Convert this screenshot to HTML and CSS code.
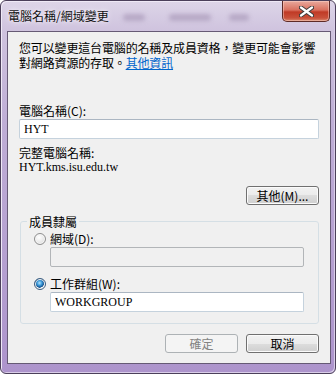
FILE: index.html
```html
<!DOCTYPE html>
<html lang="zh-Hant">
<head>
<meta charset="UTF-8">
<title>電腦名稱/網域變更</title>
<link rel="stylesheet" href="styles.css">
</head>
<body>

<div class="window">
  <div class="titlebar">
    <span class="title">電腦名稱/網域變更</span>
    <div class="glass">
      <span class="smudge s1"></span>
      <span class="smudge s2"></span>
      <span class="smudge s3"></span>
    </div>
    <button class="close">
      <svg width="15" height="11" viewBox="0 0 15 11">
        <path d="M2 1.5 L13 9.5 M13 1.5 L2 9.5" stroke="#3b3b3b" stroke-width="4.2" stroke-linecap="round"/>
        <path d="M2 1.5 L13 9.5 M13 1.5 L2 9.5" stroke="#ffffff" stroke-width="2.2" stroke-linecap="round"/>
      </svg>
    </button>
  </div>

  <div class="client">
    <p class="intro"><span class="line">您可以變更這台電腦的名稱及成員資格，變更可能會影響</span><span class="line">對網路資源的存取。<a href="#">其他資訊</a></span></p>

    <div class="label label-name">電腦名稱(C):</div>
    <input class="field" type="text" value="HYT">

    <div class="label label-full">完整電腦名稱:</div>
    <div class="fqdn">HYT.kms.isu.edu.tw</div>

    <div class="more-row">
      <button class="btn">其他(M)...</button>
    </div>

    <fieldset class="member">
      <legend>成員隸屬</legend>
      <div class="radio-row">
        <span class="radio"></span>
        <span>網域(D):</span>
      </div>
      <input class="field field-sub" type="text" disabled>
      <div class="radio-row radio-second">
        <span class="radio checked"></span>
        <span>工作群組(W):</span>
      </div>
      <input class="field field-sub" type="text" value="WORKGROUP">
    </fieldset>

    <div class="actions">
      <button class="btn" disabled>確定</button>
      <button class="btn">取消</button>
    </div>
  </div>
</div>

</body>
</html>
```

FILE: styles.css
```css
body, html {
  margin: 0;
  padding: 0;
  background: #ffffff;
  font-family: "Noto Sans CJK TC", "Liberation Sans", sans-serif;
  font-size: 12px;
  color: #000;
}

.window {
  width: 336px;
  height: 374px;
  box-sizing: border-box;
  border: 1px solid #4b3f5a;
  border-radius: 6px;
  background: linear-gradient(to bottom, #ddd5e8 0, #cfc3de 30px, #bfaed6 120px, #ad94cc 100%);
  box-shadow: inset 1px 1px 0 #efe9f6, inset -1px -1px 0 #d9cde8;
  overflow: hidden;
}

.titlebar {
  display: flex;
  align-items: flex-start;
  height: 30px;
}

.title {
  margin: 7px 0 0 7px;
  line-height: 16px;
  color: #111;
  text-shadow: 0 0 6px #f4f0f8, 0 0 3px #f4f0f8;
}

.glass {
  display: flex;
  flex: 1;
  gap: 18px;
  margin: 13px 0 0 14px;
}

.smudge {
  height: 7px;
  border-radius: 4px;
  background: #b7a9c6;
  filter: blur(2px);
}

.s1 { width: 22px; }
.s2 { width: 42px; margin-left: 6px; }
.s3 { width: 20px; }

.close {
  width: 48px;
  height: 21px;
  margin: 0 5px 0 0;
  padding: 0;
  border: 1px solid #5e2a26;
  border-top: none;
  border-radius: 0 0 5px 5px;
  background: linear-gradient(to bottom, #e9a99d 0, #d9705f 45%, #c03a26 55%, #c9513b 85%, #d98a6e 100%);
  box-shadow: inset 0 0 0 1px rgba(255, 220, 210, 0.45);
  display: flex;
  align-items: center;
  justify-content: center;
}

.client {
  width: 324px;
  height: 333px;
  box-sizing: border-box;
  margin-left: 6px;
  border: 1px solid #665a75;
  background: #f0f0f0;
  padding: 8px 11px 0 11px;
}

.intro {
  margin: 0;
  line-height: 15px;
  white-space: nowrap;
  letter-spacing: -0.15px;
}

.intro .line {
  display: block;
  height: 15px;
}

.intro a {
  color: #0066cc;
  text-decoration: underline;
}

.label {
  line-height: 15px;
}

.label-name {
  margin-top: 33px;
}

.label-full {
  margin-top: 6px;
}

.field {
  display: block;
  width: 100%;
  height: 20px;
  box-sizing: border-box;
  margin: 1px 0 0 0;
  padding: 0 4px;
  border: 1px solid #c5d2dd;
  border-top-color: #abb6c2;
  border-radius: 2px;
  background: #ffffff;
  font-family: "Liberation Serif", serif;
  font-size: 12px;
  color: #000;
  outline: none;
}

.field:disabled {
  background: #f0f0f0;
  border-color: #b2b5b8;
}

.fqdn {
  font-family: "Liberation Serif", serif;
  font-size: 12px;
  line-height: 15px;
}

.more-row {
  display: flex;
  justify-content: flex-end;
  margin-top: 11px;
}

.btn {
  width: 73px;
  height: 19px;
  padding: 0;
  border: 1px solid #707070;
  border-radius: 3px;
  background: linear-gradient(to bottom, #f2f2f2 0, #ebebeb 50%, #dddddd 50%, #cfcfcf 100%);
  box-shadow: inset 0 0 0 1px #fbfbfb;
  font-family: "Noto Sans CJK TC", "Liberation Sans", sans-serif;
  font-size: 12px;
  line-height: 15px;
  color: #000;
}

.btn:disabled {
  border-color: #adb2b5;
  background: #f4f4f4;
  box-shadow: none;
  color: #838383;
}

.member {
  margin: 9px 0 0 1px;
  padding: 2px 14px 11px 13px;
  border: 1px solid #d5dfe5;
  border-radius: 3px;
}

.member legend {
  padding: 0 2px;
  margin-left: -7px;
  line-height: 15px;
}

.radio-row {
  display: flex;
  align-items: center;
  gap: 4px;
  line-height: 15px;
}

.radio-second {
  margin-top: 9px;
}

.radio {
  width: 10px;
  height: 10px;
  border: 1px solid #8f8f8f;
  border-radius: 50%;
  background: radial-gradient(circle at 40% 35%, #ffffff 0, #e6e6e6 60%, #d0d0d0 100%);
  box-shadow: inset 0 0 0 1px #f8f8f8;
}

.radio.checked {
  border-color: #3a5c80;
  background: radial-gradient(circle at 45% 40%, #b6e6ff 0, #3a98d8 30%, #0f4d8a 55%, #ececec 60%, #ffffff 100%);
}

.field-sub {
  width: calc(100% - 16px);
  margin-left: 16px;
}

.actions {
  display: flex;
  justify-content: flex-end;
  gap: 8px;
  margin-top: 10px;
}
```
